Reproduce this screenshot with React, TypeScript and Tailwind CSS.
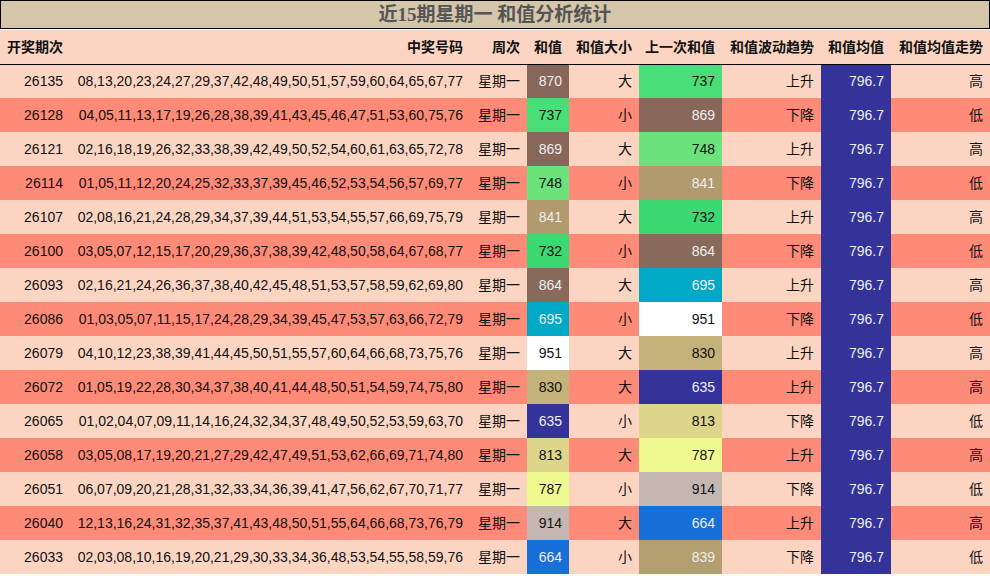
const rows: [number, string, number, string, number, string, string][] = [
  [26135, "08,13,20,23,24,27,29,37,42,48,49,50,51,57,59,60,64,65,67,77", 870, "大", 737, "上升", "高"],
  [26128, "04,05,11,13,17,19,26,28,38,39,41,43,45,46,47,51,53,60,75,76", 737, "小", 869, "下降", "低"],
  [26121, "02,16,18,19,26,32,33,38,39,42,49,50,52,54,60,61,63,65,72,78", 869, "大", 748, "上升", "高"],
  [26114, "01,05,11,12,20,24,25,32,33,37,39,45,46,52,53,54,56,57,69,77", 748, "小", 841, "下降", "低"],
  [26107, "02,08,16,21,24,28,29,34,37,39,44,51,53,54,55,57,66,69,75,79", 841, "大", 732, "上升", "高"],
  [26100, "03,05,07,12,15,17,20,29,36,37,38,39,42,48,50,58,64,67,68,77", 732, "小", 864, "下降", "低"],
  [26093, "02,16,21,24,26,36,37,38,40,42,45,48,51,53,57,58,59,62,69,80", 864, "大", 695, "上升", "高"],
  [26086, "01,03,05,07,11,15,17,24,28,29,34,39,45,47,53,57,63,66,72,79", 695, "小", 951, "下降", "低"],
  [26079, "04,10,12,23,38,39,41,44,45,50,51,55,57,60,64,66,68,73,75,76", 951, "大", 830, "上升", "高"],
  [26072, "01,05,19,22,28,30,34,37,38,40,41,44,48,50,51,54,59,74,75,80", 830, "大", 635, "上升", "高"],
  [26065, "01,02,04,07,09,11,14,16,24,32,34,37,48,49,50,52,53,59,63,70", 635, "小", 813, "下降", "低"],
  [26058, "03,05,08,17,19,20,21,27,29,42,47,49,51,53,62,66,69,71,74,80", 813, "大", 787, "上升", "高"],
  [26051, "06,07,09,20,21,28,31,32,33,34,36,39,41,47,56,62,67,70,71,77", 787, "小", 914, "下降", "低"],
  [26040, "12,13,16,24,31,32,35,37,41,43,48,50,51,55,64,66,68,73,76,79", 914, "大", 664, "上升", "高"],
  [26033, "02,03,08,10,16,19,20,21,29,30,33,34,36,48,53,54,55,58,59,76", 664, "小", 839, "下降", "低"],
];

// colour for each sum value
const sumColor: Record<number, string> = {
  870: "bg-[#876759] text-[#eeeeee]",
  869: "bg-[#876759] text-[#eeeeee]",
  864: "bg-[#876a5b] text-[#eeeeee]",
  737: "bg-[#49de78] text-[#111111]",
  732: "bg-[#3cd872] text-[#111111]",
  748: "bg-[#6be27c] text-[#111111]",
  841: "bg-[#b09a6e] text-[#eeeeee]",
  839: "bg-[#b39e6f] text-[#eeeeee]",
  695: "bg-[#00a9c6] text-[#eeeeee]",
  951: "bg-white text-[#111111]",
  830: "bg-[#c4b27a] text-[#111111]",
  635: "bg-[#333399] text-[#eeeeee]",
  813: "bg-[#ddd68a] text-[#111111]",
  787: "bg-[#eef98f] text-[#111111]",
  914: "bg-[#c4b7b1] text-[#111111]",
  664: "bg-[#1670d8] text-[#eeeeee]",
};

const headers = ["开奖期次", "中奖号码", "周次", "和值", "和值大小", "上一次和值", "和值波动趋势", "和值均值", "和值均值走势"];

const App = () => {
  return (
    <div className="w-[990px] h-[576px] bg-white overflow-hidden font-['Liberation_Sans','Noto_Sans_CJK_SC',sans-serif] text-[14px] text-[#111111]">
      {/* Title */}
      <div className="h-[29px] border border-black bg-[#d5c6aa] flex items-center justify-center">
        <span className="text-[19px] font-bold text-[#555555] font-['Liberation_Serif','Noto_Sans_CJK_SC',serif] leading-none">
          近15期星期一 和值分析统计
        </span>
      </div>

      <table className="w-[990px] table-fixed border-collapse mt-px">
        <colgroup>
          <col className="w-[70px]" />
          <col className="w-[400px]" />
          <col className="w-[57px]" />
          <col className="w-[42px]" />
          <col className="w-[70px]" />
          <col className="w-[83px]" />
          <col className="w-[99px]" />
          <col className="w-[70px]" />
          <col className="w-[99px]" />
        </colgroup>
        <thead>
          <tr className="h-[34px] bg-[#fbd5c2] border-b border-black">
            {headers.map((h) => (
              <th key={h} className="text-right pr-[7px] font-bold text-[14px] whitespace-nowrap font-['Noto_Sans_CJK_SC',sans-serif]">
                {h}
              </th>
            ))}
          </tr>
        </thead>
        <tbody>
          {rows.map((r, i) => {
            const rowBg = i % 2 === 0 ? "bg-[#fbd5c2]" : "bg-[#fe8a78]";
            return (
              <tr key={r[0]} className={`h-[34px] ${rowBg}`}>
                <td className="text-right pr-[7px]">{r[0]}</td>
                <td className="text-right pr-[7px] whitespace-nowrap">{r[1]}</td>
                <td className="text-right pr-[7px] whitespace-nowrap">星期一</td>
                <td className={`text-right pr-[7px] ${sumColor[r[2]]}`}>{r[2]}</td>
                <td className="text-right pr-[7px]">{r[3]}</td>
                <td className={`text-right pr-[7px] ${sumColor[r[4]]}`}>{r[4]}</td>
                <td className="text-right pr-[7px]">{r[5]}</td>
                <td className="text-right pr-[7px] bg-[#333399] text-[#eeeeee]">796.7</td>
                <td className="text-right pr-[7px]">{r[6]}</td>
              </tr>
            );
          })}
        </tbody>
      </table>
    </div>
  );
};

export default App;
